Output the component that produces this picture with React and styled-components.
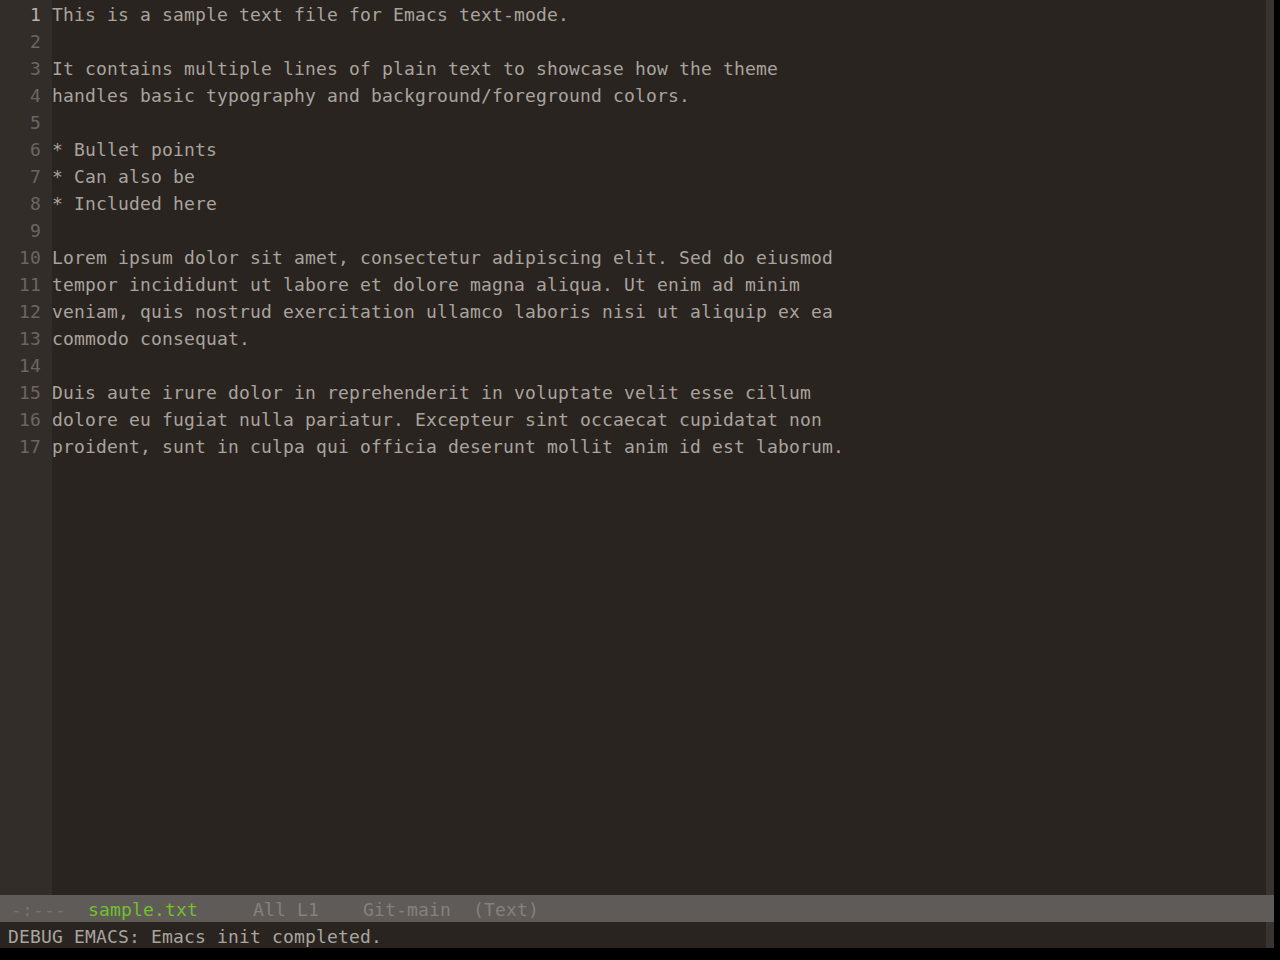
import React from "react";
import styled, { createGlobalStyle } from "styled-components";

const GlobalStyle = createGlobalStyle`
  html, body {
    margin: 0;
    padding: 0;
    background: #000;
  }
  body {
    font-family: "DejaVu Sans Mono", "Liberation Mono", monospace;
  }
`;

const Screen = styled.div`
  width: 1280px;
  height: 960px;
  background: #000;
  overflow: hidden;
`;

const Frame = styled.div`
  width: 1274px;
  display: flex;
  flex-direction: column;
  font-size: 18px;
  letter-spacing: 0.164px;
`;

const Window = styled.div`
  height: 895px;
  display: flex;
  background: #29241f;
`;

const Gutter = styled.div`
  width: 52px;
  background: #332d2a;
  box-sizing: border-box;
  padding-right: 11px;
  text-align: right;
`;

const Text = styled.div`
  flex: 1;
  white-space: pre;
  color: #a9a39e;
`;

const Fringe = styled.div`
  width: 8px;
  background: #3a3431;
`;

const Row = styled.div`
  height: 26px;
  padding-top: 1px;
  line-height: 27px;
`;

const LineNo = styled(Row)`
  color: ${(p) => (p.$current ? "#b9b3ae" : "#6c6662")};
`;

const ModeLine = styled.div`
  height: 26px;
  padding-top: 1px;
  line-height: 27px;
  background: #5f5b58;
  color: #86817d;
  white-space: pre;
`;

const Dim = styled.span`
  color: #77726e;
`;

const FileName = styled.span`
  color: #72c12c;
`;

const Echo = styled.div`
  height: 26px;
  display: flex;
  background: #29241f;
`;

const EchoText = styled.div`
  flex: 1;
  padding-left: 8px;
  padding-top: 1px;
  line-height: 27px;
  color: #aaa49f;
  white-space: pre;
`;

const lines = [
  "This is a sample text file for Emacs text-mode.",
  "",
  "It contains multiple lines of plain text to showcase how the theme",
  "handles basic typography and background/foreground colors.",
  "",
  "* Bullet points",
  "* Can also be",
  "* Included here",
  "",
  "Lorem ipsum dolor sit amet, consectetur adipiscing elit. Sed do eiusmod",
  "tempor incididunt ut labore et dolore magna aliqua. Ut enim ad minim",
  "veniam, quis nostrud exercitation ullamco laboris nisi ut aliquip ex ea",
  "commodo consequat.",
  "",
  "Duis aute irure dolor in reprehenderit in voluptate velit esse cillum",
  "dolore eu fugiat nulla pariatur. Excepteur sint occaecat cupidatat non",
  "proident, sunt in culpa qui officia deserunt mollit anim id est laborum.",
];

export default function App() {
  return (
    <Screen>
      <GlobalStyle />
      <Frame>
        <Window>
          <Gutter>
            {lines.map((_, i) => (
              <LineNo key={i} $current={i === 0}>
                {i + 1}
              </LineNo>
            ))}
          </Gutter>
          <Text>
            {lines.map((l, i) => (
              <Row key={i}>{l}</Row>
            ))}
          </Text>
          <Fringe />
        </Window>
        <ModeLine>
          {" "}
          <Dim>-:---</Dim>
          {"  "}
          <FileName>sample.txt</FileName>
          {"     All L1    Git-main  (Text)"}
        </ModeLine>
        <Echo>
          <EchoText>DEBUG EMACS: Emacs init completed.</EchoText>
          <Fringe />
        </Echo>
      </Frame>
    </Screen>
  );
}
